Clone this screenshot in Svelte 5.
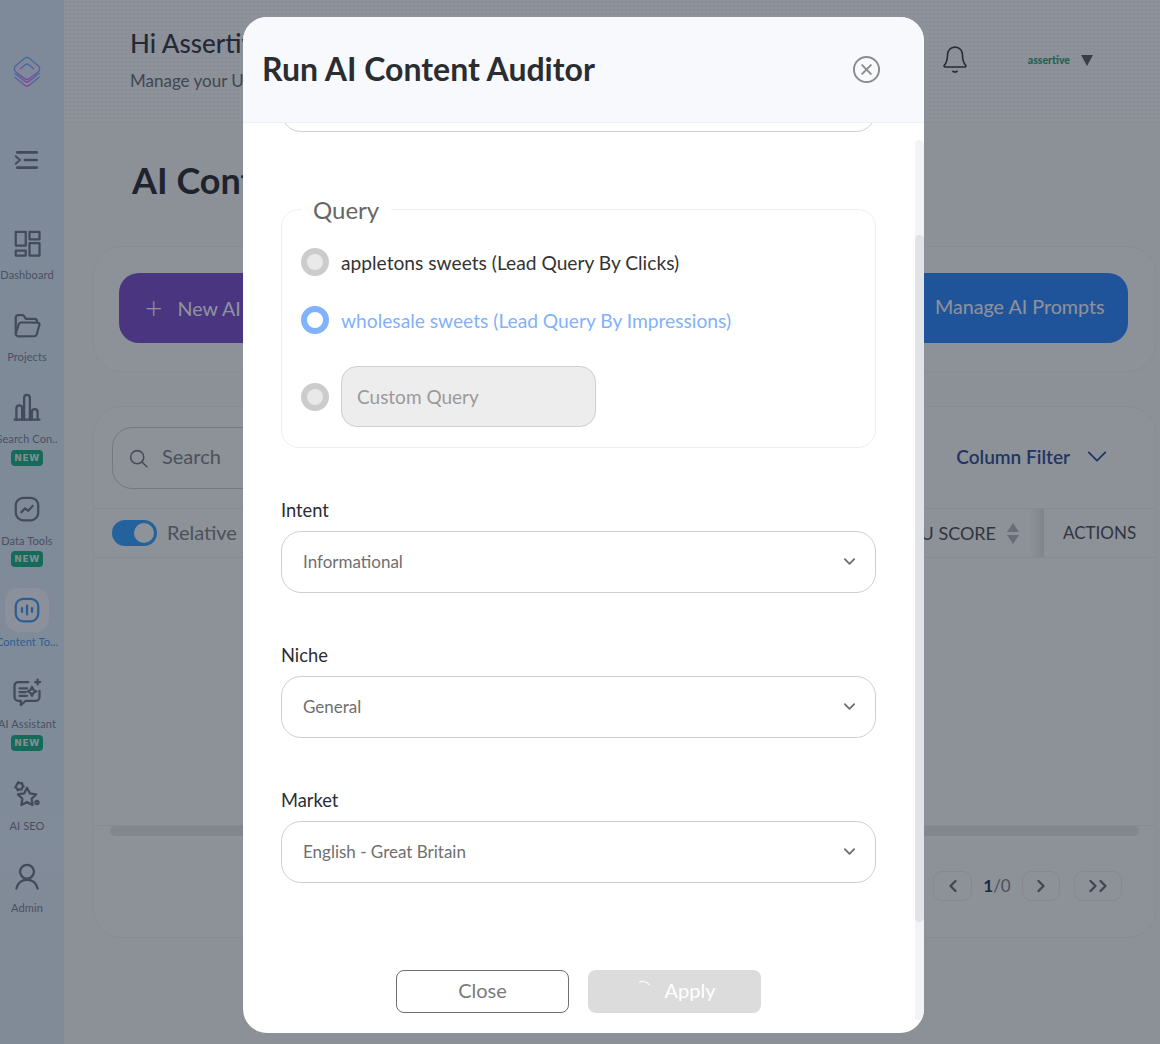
<script>
  const navItems = [
    { label: 'Dashboard', paths: ['M3 3h8v11H3z', 'M14 3h8v6h-8z', 'M3 18h8v4H3z', 'M14 12h8v10h-8z'] },
    { label: 'Projects', paths: ['M3 19V6a2 2 0 0 1 2-2h4l2 3h7a2 2 0 0 1 2 2v1', 'M3 19l2.4-7.6A2 2 0 0 1 7.3 10h13.2a1.5 1.5 0 0 1 1.4 2l-2.2 7.6a2 2 0 0 1-1.9 1.4H5a2 2 0 0 1-2-2z'] },
    { label: 'Search Con..', badge: true, paths: ['M2 22h20', 'M3.5 22v-9a2.3 2.3 0 0 1 4.6 0v9', 'M9.7 22V4.500a2.300 2.300 0 0 1 4.600 0V22', 'M15.900 22v-6a2.300 2.300 0 0 1 4.600 0v6'] },
    { label: 'Data Tools', badge: true, paths: ['M9 3h6a6 6 0 0 1 6 6v6a6 6 0 0 1-6 6H9a6 6 0 0 1-6-6V9a6 6 0 0 1 6-6z', 'M7.500 14.500l3-3 2.500 2 3.500-4'] },
    { label: 'Content To...', active: true, paths: ['M9 3h6a6 6 0 0 1 6 6v6a6 6 0 0 1-6 6H9a6 6 0 0 1-6-6V9a6 6 0 0 1 6-6z', 'M8 10.500v3', 'M12 8.500v7', 'M16 10.500v3'] },
    { label: 'AI Assistant', badge: true, paths: ['M13 4H5a3 3 0 0 0-3 3v9a3 3 0 0 0 3 3h2v3.500l4-3.500h8a3 3 0 0 0 3-3v-5', 'M6 9h6', 'M6 12h5', 'M6 15h6', 'M16 8l1.200 2.300 2.300 1.200-2.300 1.200-1.200 2.300-1.200-2.300-2.300-1.200 2.300-1.200z', 'M20.500 2v4', 'M18.500 4h4'] },
    { label: 'AI SEO', paths: ['M12 7l2.300 4.500 5 .8-3.600 3.500.8 5-4.500-2.300-4.500 2.300.8-5-3.600-3.500 5-.8z', 'M5 2.500l1.500 1 1.500-.3.300 1.500 1 1.300-1.300 1-.3 1.500-1.500-.3-1.500.8-.8-1.500-1.300-.8.800-1.300z', 'M20 17.500a1.300 1.300 0 1 0 .01 0z'] },
    { label: 'Admin', paths: ['M12 3a5.500 5.500 0 1 0 .01 0z', 'M3.500 22c1-4.500 4-7 8.500-7s7.500 2.500 8.500 7'] }
  ];

  const selects = [
    { label: 'Intent', value: 'Informational' },
    { label: 'Niche', value: 'General' },
    { label: 'Market', value: 'English - Great Britain' }
  ];
</script>

<div class="page">
  <aside class="sidebar">
    <svg class="logo" viewBox="0 0 28 32" fill="none" stroke="url(#logoGrad)" stroke-width="1.400">
      <defs>
        <linearGradient id="logoGrad" x1="0" y1="0" x2="0" y2="1">
          <stop offset="0" stop-color="#50afff" />
          <stop offset="1" stop-color="#dc5fff" />
        </linearGradient>
      </defs>
      <path d="M11.500 2.500a4 4 0 0 1 5 0l8.500 7a4 4 0 0 1 0 6.500l-8.500 6.500a4 4 0 0 1-5 0L3 16a4 4 0 0 1 0-6.500z" />
      <path d="M7 13l5.500-4.500a2.500 2.500 0 0 1 3 0L21 13" />
      <path d="M1.500 17l10 8a4 4 0 0 0 5 0l10-8" />
      <path d="M1.500 21l10 8a4 4 0 0 0 5 0l10-8" />
    </svg>
    <svg class="collapse" viewBox="0 0 24 24" fill="none" stroke="#5e677c" stroke-width="2.400" stroke-linecap="round">
      <path d="M3 5h18" /><path d="M10 12h11" /><path d="M3 19h18" /><path d="M1.500 8.500L5.500 12l-4 3.500" stroke-width="1.800" />
    </svg>
    <nav class="nav">
      {#each navItems as item}
        <div class="nav-item" class:active={item.active}>
          <div class="nav-icon">
            <svg viewBox="0 0 24 24" fill="none" stroke="currentColor" stroke-width="1.800" stroke-linecap="round" stroke-linejoin="round">
              {#each item.paths as d}
                <path {d} />
              {/each}
            </svg>
          </div>
          <span class="nav-label">{item.label}</span>
          {#if item.badge}
            <span class="badge">NEW</span>
          {/if}
        </div>
      {/each}
    </nav>
  </aside>

  <div class="main">
    <header class="topbar">
      <div class="greeting">
        <h2>Hi Assertive</h2>
        <p>Manage your UI</p>
      </div>
      <svg class="bell" viewBox="0 0 24 28" fill="none" stroke="#252a35" stroke-width="1.500" stroke-linecap="round" stroke-linejoin="round">
        <path d="M12 2c-4.500 0-7 3.500-7 7.500 0 4.500-.8 7-3 9.500-.5.600-.2 1.500.8 1.500h18.400c1 0 1.300-.9.800-1.500-2.200-2.500-3-5-3-9.500C19 5.500 16.500 2 12 2z" />
        <path d="M10 24.500c1.200.8 2.800.8 4 0" />
      </svg>
      <div class="user">
        <span>assertive</span>
        <i class="caret"></i>
      </div>
    </header>

    <h1 class="page-title">AI Content Tools</h1>

    <section class="card actions">
      <button class="btn-new"><span class="plus">+</span> New AI Content</button>
      <button class="btn-manage">Manage AI Prompts</button>
    </section>

    <section class="card list">
      <div class="filters">
        <div class="search">
          <svg viewBox="0 0 24 24" fill="none" stroke="#666b75" stroke-width="1.800" stroke-linecap="round">
            <circle cx="10.500" cy="10.500" r="7.500" /><path d="M16 16l5.500 5.500" />
          </svg>
          <span>Search</span>
        </div>
        <div class="column-filter">
          <span>Column Filter</span>
          <svg viewBox="0 0 24 14" fill="none" stroke="#183c8c" stroke-width="2" stroke-linecap="round" stroke-linejoin="round">
            <path d="M3 2.500l9 9 9-9" />
          </svg>
        </div>
      </div>
      <div class="table-head">
        <span class="toggle"><i></i></span>
        <span class="relative">Relative</span>
        <span class="score">U SCORE</span>
        <span class="sort"><i class="up"></i><i class="down"></i></span>
        <span class="col-actions">ACTIONS</span>
      </div>
      <div class="table-body"></div>
      <div class="hscroll"><i></i></div>
      <div class="pagination">
        <span class="page-btn prev">
          <svg viewBox="0 0 10 14" fill="none" stroke="currentColor" stroke-width="2.400" stroke-linecap="round" stroke-linejoin="round"><path d="M7.500 2L2.500 7l5 5" /></svg>
        </span>
        <span class="page-count"><b>1</b>/0</span>
        <span class="page-btn next">
          <svg viewBox="0 0 10 14" fill="none" stroke="currentColor" stroke-width="2.400" stroke-linecap="round" stroke-linejoin="round"><path d="M2.500 2l5 5-5 5" /></svg>
        </span>
        <span class="page-btn last">
          <svg viewBox="0 0 20 14" fill="none" stroke="currentColor" stroke-width="2.400" stroke-linecap="round" stroke-linejoin="round"><path d="M2.500 2l5 5-5 5" /><path d="M12.500 2l5 5-5 5" /></svg>
        </span>
      </div>
    </section>
  </div>
</div>

<div class="backdrop"></div>

<div class="modal">
  <header class="modal-head">
    <h2>Run AI Content Auditor</h2>
    <svg class="close-x" viewBox="0 0 30 30" fill="none" stroke="#8b8b8b" stroke-width="2" stroke-linecap="round">
      <circle cx="15" cy="15" r="13" /><path d="M10.500 10.500l9 9" /><path d="M19.500 10.500l-9 9" />
    </svg>
  </header>

  <div class="modal-body">
    <div class="cut-input"></div>

    <fieldset class="query">
      <legend>Query</legend>
      <label class="radio-row">
        <span class="radio"></span>
        <span>appletons sweets (Lead Query By Clicks)</span>
      </label>
      <label class="radio-row selected">
        <span class="radio"></span>
        <span>wholesale sweets (Lead Query By Impressions)</span>
      </label>
      <div class="radio-row custom">
        <span class="radio"></span>
        <div class="custom-input">Custom Query</div>
      </div>
    </fieldset>

    {#each selects as s}
      <div class="field">
        <div class="field-label">{s.label}</div>
        <div class="select">
          <span>{s.value}</span>
          <svg viewBox="0 0 14 9" fill="none" stroke="#6f6f6f" stroke-width="2" stroke-linecap="round" stroke-linejoin="round">
            <path d="M2 2l5 5 5-5" />
          </svg>
        </div>
      </div>
    {/each}

    <div class="modal-actions">
      <button class="btn-close">Close</button>
      <button class="btn-apply"><i class="spinner"></i>Apply</button>
    </div>
  </div>

  <div class="scroll-track"><i></i></div>
</div>

<style>
  :global(body) {
    margin: 0;
    background: #f0f3f2;
    font-family: Lato, "Open Sans", sans-serif;
    overflow: hidden;
  }

  .page {
    display: flex;
    height: 1044px;
    overflow: hidden;
  }

  .sidebar {
    width: 64px;
    flex: none;
    background: linear-gradient(180deg, #d4e6f8, #dbe9f5);
    display: flex;
    flex-direction: column;
    align-items: center;
    padding: 56px 10px 0 0;
    box-sizing: border-box;
    overflow: hidden;
  }

  .logo {
    width: 28px;
    height: 32px;
    flex: none;
  }

  .collapse {
    width: 26px;
    height: 26px;
    flex: none;
    margin-top: 59px;
  }

  .nav {
    margin-top: 54px;
    display: flex;
    flex-direction: column;
    gap: 27px;
    width: 54px;
    align-items: center;
  }

  .nav-item {
    display: flex;
    flex-direction: column;
    align-items: center;
    color: #5e677c;
    width: 54px;
    flex: none;
  }

  .nav-icon {
    position: relative;
    height: 32px;
    width: 32px;
    display: flex;
    align-items: center;
    justify-content: center;
  }

  .nav-icon svg {
    width: 30px;
    height: 30px;
    position: relative;
  }

  .active .nav-icon::before {
    content: '';
    position: absolute;
    left: -6px;
    top: -6px;
    width: 44px;
    height: 44px;
    border-radius: 14px;
    background: #eef3f8;
  }

  .nav-label {
    margin-top: 9px;
    font-size: 11px;
    letter-spacing: 0.1px;
    line-height: 14px;
    height: 14px;
    white-space: nowrap;
    color: #6a7386;
  }

  .active,
  .active .nav-label {
    color: #2f8fec;
  }

  .badge {
    margin-top: 3.5px;
    height: 16px;
    width: 32px;
    border-radius: 4px;
    background: #00a878;
    color: #e0f0ea;
    font-family: "DejaVu Sans", sans-serif;
    font-size: 9px;
    font-weight: 700;
    letter-spacing: 0.6px;
    line-height: 16px;
    text-align: center;
  }

  .main {
    flex: 1;
    min-width: 0;
    display: flex;
    flex-direction: column;
    box-sizing: border-box;
    padding-right: 4px;
  }

  .topbar {
    height: 123px;
    flex: none;
    margin-right: -4px;
    box-sizing: border-box;
    border-bottom: 1px solid #e9ecee;
    padding: 0 67px 0 66px;
    display: flex;
    align-items: flex-start;
    background-color: #f2f4f6;
    background-image: radial-gradient(circle, #eceef0 1px, transparent 1px);
    background-size: 4px 4px;
  }

  .greeting {
    flex: 1;
    padding-top: 27px;
  }

  .greeting h2 {
    margin: 0;
    font-size: 26px;
    font-weight: 500;
    line-height: 32px;
    color: #1f2530;
  }

  .greeting p {
    margin: 11px 0 0;
    font-size: 17px;
    line-height: 22px;
    color: #5a5e67;
  }

  .bell {
    width: 26px;
    height: 30px;
    margin-top: 45px;
  }

  .user {
    margin: 52px 0 0 60px;
    display: flex;
    align-items: center;
    gap: 11px;
    font-size: 10.5px;
    font-weight: 900;
    color: #12976a;
    height: 16px;
  }

  .caret {
    width: 0;
    height: 0;
    border-left: 6.5px solid transparent;
    border-right: 6.5px solid transparent;
    border-top: 11px solid #4a4d55;
  }

  .page-title {
    margin: 35px 0 0 68px;
    font-size: 36px;
    font-weight: 700;
    line-height: 44px;
    color: #16191f;
    height: 44px;
  }

  .card {
    margin-left: 29px;
    border: 1px solid #e8ebec;
    border-radius: 28px;
    box-sizing: border-box;
    background: #f2f5f4;
  }

  .actions {
    margin-top: 44px;
    height: 126px;
    padding: 26px 27px 26px 25px;
    display: flex;
    justify-content: space-between;
  }

  .actions button {
    height: 70px;
    border: 0;
    border-radius: 20px;
    font: inherit;
    font-size: 19.7px;
    color: #f4f4fb;
    padding-bottom: 4px;
  }

  .btn-new {
    width: 240px;
    background: #6c3dc4;
    text-align: left;
    padding-left: 26px;
  }

  .plus {
    font-size: 30px;
    font-weight: 300;
    margin-right: 10px;
    vertical-align: -3px;
  }

  .btn-manage {
    width: 300px;
    background: #187bf8;
    padding-left: 107px;
    text-align: left;
  }

  .list {
    margin-top: 34px;
    height: 532px;
    display: flex;
    flex-direction: column;
    overflow: hidden;
  }

  .filters {
    height: 101px;
    flex: none;
    padding: 20px 47px 0 18px;
    display: flex;
    justify-content: space-between;
    box-sizing: border-box;
  }

  .search {
    width: 260px;
    height: 62px;
    box-sizing: border-box;
    border: 1px solid #c0c4c8;
    border-radius: 20px;
    display: flex;
    align-items: center;
    gap: 13px;
    padding: 0 0 5px 15px;
    font-size: 20px;
    color: #6f747d;
  }

  .search svg {
    width: 21px;
    height: 21px;
    margin-top: 5px;
  }

  .column-filter {
    display: flex;
    align-items: center;
    gap: 16px;
    height: 62px;
    padding-bottom: 3px;
    box-sizing: border-box;
    font-size: 19px;
    font-weight: 600;
    color: #183c8c;
  }

  .column-filter svg {
    width: 22px;
    height: 13px;
  }

  .table-head {
    height: 50px;
    flex: none;
    box-sizing: border-box;
    border-top: 1px solid #e4e6e8;
    border-bottom: 1px solid #e4e6e8;
    padding-left: 18px;
    display: flex;
    align-items: center;
    font-size: 18px;
    color: #373c47;
  }

  .toggle {
    width: 45px;
    height: 26px;
    border-radius: 13px;
    background: #1e97ff;
    position: relative;
    flex: none;
  }

  .toggle i {
    position: absolute;
    right: 3px;
    top: 3px;
    width: 20px;
    height: 20px;
    border-radius: 50%;
    background: #f5f7fa;
  }

  .relative {
    margin-left: 10px;
    padding-bottom: 2px;
    font-size: 20px;
    color: #6f7480;
    flex: 1;
  }

  .score {
    margin-right: 11px;
  }

  .sort {
    width: 13px;
    display: flex;
    flex-direction: column;
    gap: 3px;
    margin-right: 24px;
  }

  .sort i {
    width: 0;
    height: 0;
    border-left: 6.5px solid transparent;
    border-right: 6.5px solid transparent;
  }

  .sort .up {
    border-bottom: 9px solid #a9adb4;
  }

  .sort .down {
    border-top: 9px solid #a9adb4;
  }

  .col-actions {
    width: 111px;
    height: 100%;
    flex: none;
    box-sizing: border-box;
    padding-left: 19px;
    font-size: 17px;
    line-height: 48px;
    position: relative;
  }

  .col-actions::before {
    content: '';
    position: absolute;
    left: -14px;
    top: 0;
    bottom: 0;
    width: 14px;
    background: linear-gradient(90deg, transparent, rgba(120, 125, 135, 0.22));
  }

  .table-body {
    height: 267px;
    flex: none;
  }

  .hscroll {
    height: 10px;
    flex: none;
    border-top: 1px solid #e6e8ea;
    padding: 0 16px;
  }

  .hscroll i {
    display: block;
    height: 10px;
    border-radius: 5px;
    background: #dddfe1;
  }

  .pagination {
    margin-top: 34px;
    display: flex;
    align-items: center;
    justify-content: flex-end;
    padding-right: 33px;
    height: 31px;
    color: #5c616c;
  }

  .page-btn {
    height: 30px;
    box-sizing: border-box;
    border: 1px solid #e2e4e6;
    border-radius: 9px;
    display: flex;
    align-items: center;
    justify-content: center;
  }

  .page-btn svg {
    height: 14px;
    width: 10px;
  }

  .page-btn.last svg {
    width: 20px;
  }

  .prev {
    width: 39px;
  }

  .next {
    width: 38px;
    margin-right: 14px;
  }

  .last {
    width: 48px;
  }

  .page-count {
    width: 50px;
    text-align: center;
    font-size: 17px;
    color: #6f747d;
  }

  .page-count b {
    font-weight: 700;
    color: #122347;
  }

  .backdrop {
    position: fixed;
    inset: 0;
    background: rgba(40, 45, 60, 0.5);
  }

  .modal {
    position: fixed;
    left: 243px;
    top: 17px;
    width: 681px;
    height: 1016px;
    background: #fff;
    border-radius: 24px;
    overflow: hidden;
    display: flex;
    flex-direction: column;
  }

  .modal-head {
    height: 106px;
    flex: none;
    position: relative;
    z-index: 1;
    box-sizing: border-box;
    background: #f7f9fd;
    border-bottom: 1px solid #eef0f3;
    display: flex;
    align-items: center;
    justify-content: space-between;
    padding: 0 43px 0 19px;
  }

  .modal-head h2 {
    margin: 0 0 2px;
    font-size: 32px;
    font-weight: 700;
    color: #2b2d30;
  }

  .close-x {
    width: 29px;
    height: 29px;
  }

  .modal-body {
    flex: 1;
    overflow: hidden;
    padding: 0 48px 0 38px;
  }

  .cut-input {
    height: 30px;
    margin-top: -21px;
    box-sizing: border-box;
    border: 1px solid #d0d0d0;
    border-radius: 0 0 20px 20px;
  }

  .query {
    margin: 62px 0 0;
    height: 254px;
    box-sizing: border-box;
    border: 1px solid #eeeeee;
    border-radius: 18px;
    padding: 0 19px;
    min-width: 0;
  }

  .query legend {
    padding: 2px 12px 0;
    font-size: 24px;
    line-height: 28px;
    color: #666;
  }

  .radio-row {
    display: flex;
    align-items: center;
    gap: 12px;
    height: 30px;
    margin-top: 23px;
    font-size: 19.2px;
    color: #333;
  }

  .radio-row.selected {
    margin-top: 28px;
    color: #7fb2fb;
  }

  .radio-row.custom {
    margin-top: 31px;
    height: 61px;
  }

  .radio {
    width: 28px;
    height: 28px;
    flex: none;
    box-sizing: border-box;
    border-radius: 50%;
    border: 6px solid #cccccc;
    background: #e9e9e9;
  }

  .selected .radio {
    border-color: #80b3fb;
    background: #fff;
  }

  .custom-input {
    width: 255px;
    height: 61px;
    box-sizing: border-box;
    border: 1px solid #cfcfcf;
    border-radius: 16px;
    background: #ededed;
    padding-left: 15px;
    line-height: 59px;
    font-size: 19px;
    color: #9a9a9a;
  }

  .field {
    margin-top: 49px;
  }

  .field-label {
    height: 26px;
    line-height: 26px;
    font-size: 18.3px;
    color: #2a2d33;
    margin-bottom: 8px;
  }

  .select {
    height: 62px;
    box-sizing: border-box;
    border: 1px solid #cfcfcf;
    border-radius: 20px;
    display: flex;
    align-items: center;
    justify-content: space-between;
    padding: 0 19px 2px 21px;
    font-size: 17px;
    color: #6f6f6f;
  }

  .select svg {
    width: 13px;
    height: 9px;
  }

  .modal-actions {
    margin-top: 87px;
    display: flex;
    justify-content: center;
    gap: 19px;
  }

  .modal-actions button {
    width: 173px;
    height: 43px;
    box-sizing: border-box;
    border-radius: 8px;
    font: inherit;
    font-size: 20px;
    padding-bottom: 5px;
  }

  .btn-close {
    background: #fff;
    border: 1px solid #6f6f6f;
    color: #7a7a7a;
  }

  .btn-apply {
    background: #dcdcdc;
    border: 0;
    color: #fff;
    position: relative;
    padding-left: 37px;
  }

  .spinner {
    position: absolute;
    left: 47px;
    top: 11px;
    width: 16px;
    height: 16px;
    box-sizing: border-box;
    border-radius: 50%;
    border: 1.500px solid transparent;
    border-top-color: #fff;
    transform: rotate(15deg);
  }

  .scroll-track {
    position: absolute;
    right: 0;
    top: 123px;
    bottom: 13px;
    width: 9px;
    background: #f3f3f5;
    border-radius: 5px 5px 0 0;
  }

  .scroll-track i {
    position: absolute;
    left: 0;
    right: 0;
    top: 95px;
    height: 687px;
    background: #e2e3e8;
    border-radius: 5px;
  }
</style>
